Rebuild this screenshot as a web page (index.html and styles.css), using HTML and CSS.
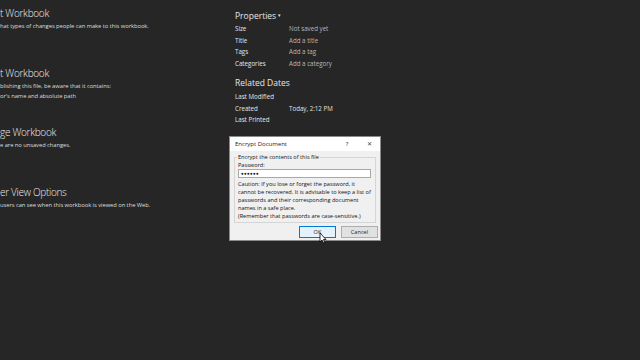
FILE: index.html
```html
<!DOCTYPE html>
<html>
<head>
<meta charset="utf-8">
<link rel="stylesheet" href="styles.css">
</head>
<body>
<div class="page">
  <div class="left">
    <section class="sec sec1">
      <h2 class="sec-title">t Workbook</h2>
      <p class="sec-text">hat types of changes people can make to this workbook.</p>
    </section>
    <section class="sec sec2">
      <h2 class="sec-title">t Workbook</h2>
      <p class="sec-text">blishing this file, be aware that it contains:</p>
      <p class="sec-text">or's name and absolute path</p>
    </section>
    <section class="sec sec3">
      <h2 class="sec-title">ge Workbook</h2>
      <p class="sec-text">e are no unsaved changes.</p>
    </section>
    <section class="sec sec4">
      <h2 class="sec-title">er View Options</h2>
      <p class="sec-text">users can see when this workbook is viewed on the Web.</p>
    </section>
  </div>
  <div class="right">
    <h3 class="prop-title">Properties <span class="caret">&#9662;</span></h3>
    <div class="prop-grid">
      <span class="lbl">Size</span><span class="val">Not saved yet</span>
      <span class="lbl">Title</span><span class="val">Add a title</span>
      <span class="lbl">Tags</span><span class="val">Add a tag</span>
      <span class="lbl">Categories</span><span class="val">Add a category</span>
    </div>
    <h3 class="prop-title dates">Related Dates</h3>
    <div class="prop-grid dates-grid">
      <span class="lbl">Last Modified</span><span class="val"></span>
      <span class="lbl">Created</span><span class="val light">Today, 2:12 PM</span>
      <span class="lbl">Last Printed</span><span class="val"></span>
    </div>
  </div>
</div>

<div class="dialog">
  <div class="dlg-titlebar">
    <span class="dlg-title">Encrypt Document</span>
    <span class="dlg-help">?</span>
    <span class="dlg-close">&#x2715;</span>
  </div>
  <div class="dlg-body">
    <fieldset class="dlg-group">
      <legend class="dlg-legend">Encrypt the contents of this file</legend>
      <label class="dlg-label">Password:</label>
      <div class="dlg-input">&#9679;&#9679;&#9679;&#9679;&#9679;&#9679;</div>
      <p class="dlg-caution">Caution: If you lose or forget the password, it cannot be recovered. It is advisable to keep a list of passwords and their corresponding document names in a safe place.<br>(Remember that passwords are case-sensitive.)</p>
    </fieldset>
    <div class="dlg-buttons">
      <button class="btn btn-ok">OK</button>
      <button class="btn">Cancel</button>
    </div>
  </div>
  <svg class="cursor" width="8" height="12" viewBox="0 0 8 12">
    <path d="M1 1 L1 10 L3 8 L4.5 11 L5.8 10.4 L4.4 7.5 L7 7.5 Z" fill="#fff" stroke="#000" stroke-width="0.8"/>
  </svg>
</div>
</body>
</html>
```

FILE: styles.css
```css
html, body {
  margin: 0;
  padding: 0;
}
body {
  width: 640px;
  height: 360px;
  background: #262626;
  overflow: hidden;
  font-family: "Open Sans", "Noto Sans", sans-serif;
  position: relative;
}
.page {
  display: flex;
  height: 360px;
}
.left {
  width: 235px;
  flex: none;
  display: flex;
  flex-direction: column;
  padding-top: 5px;
}
.sec {
  height: 59.7px;
}
.sec-title {
  margin: 0;
  font-weight: 300;
  font-size: 10px;
  line-height: 16px;
  color: #ececec;
  letter-spacing: -0.3px;
}
.sec-text {
  margin: 0;
  font-size: 5.8px;
  line-height: 10px;
  color: #dedede;
  letter-spacing: -0.05px;
}
.right {
  flex: 1;
  padding-top: 8px;
}
.prop-title {
  margin: 0;
  font-weight: 400;
  font-size: 8.5px;
  line-height: 14px;
  color: #e6e6e6;
}
.caret {
  font-size: 5px;
  vertical-align: 2px;
}
.prop-grid {
  display: grid;
  grid-template-columns: 54px 1fr;
  grid-auto-rows: 11.5px;
  font-size: 6.2px;
  line-height: 11.5px;
}
.lbl { color: #e6e6e6; }
.val { color: #b8b8b8; }
.val.light { color: #e0e0e0; }
.dates {
  margin-top: 7px;
}
.dates-grid {
  margin-top: 1px;
}

.dialog {
  position: absolute;
  left: 229px;
  top: 136px;
  width: 152px;
  height: 105px;
  background: #f0f0f0;
  border: 1px solid #8a8a8a;
  box-sizing: border-box;
  font-family: "Open Sans", "Noto Sans", sans-serif;
  display: flex;
  flex-direction: column;
}
.dlg-titlebar {
  height: 14px;
  background: #ffffff;
  display: flex;
  align-items: center;
  font-size: 6px;
  color: #222;
  padding: 0 0 0 5px;
}
.dlg-title { flex: 1; }
.dlg-help { width: 22px; text-align: center; }
.dlg-close { width: 22px; text-align: center; font-size: 6px; color: #444; }
.dlg-body {
  flex: 1;
  padding: 2px 2px 2px 4px;
  display: flex;
  flex-direction: column;
}
.dlg-group {
  margin: 0 2px 0 0;
  border: 1px solid #d5d5d5;
  padding: 0 4px 2px 3px;
  min-width: 0;
}
.dlg-legend {
  font-size: 5.6px;
  color: #111;
  padding: 0 1px;
  margin-left: -1px;
}
.dlg-label {
  display: block;
  font-size: 5.6px;
  line-height: 8px;
  color: #111;
}
.dlg-input {
  height: 9px;
  background: #fff;
  border: 1px solid #a8a8a8;
  box-sizing: border-box;
  font-size: 4.5px;
  line-height: 7px;
  letter-spacing: 0.3px;
  padding-left: 2px;
  color: #111;
}
.dlg-caution {
  margin: 2px 0 0 0;
  font-size: 5.6px;
  line-height: 8px;
  color: #111;
}
.dlg-buttons {
  margin-top: auto;
  display: flex;
  justify-content: flex-end;
  gap: 5px;
}
.btn {
  width: 37px;
  height: 12px;
  padding: 0;
  font-family: inherit;
  font-size: 5.6px;
  color: #222;
  background: #e1e1e1;
  border: 1px solid #adadad;
}
.btn-ok {
  background: #e5f1fb;
  border: 1px solid #0078d7;
}
.cursor {
  position: absolute;
  left: 89px;
  top: 95px;
}
```
